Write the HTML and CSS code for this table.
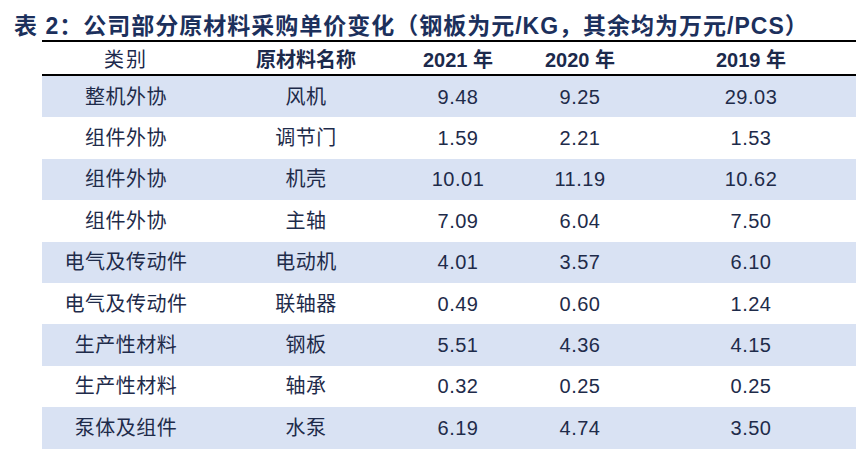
FILE: index.html
```html
<!DOCTYPE html>
<html lang="zh-CN">
<head>
<meta charset="utf-8">
<title>表2</title>
<link rel="stylesheet" href="styles.css">
</head>
<body>
<div class="page">
  <h1 class="title">表 2：公司部分原材料采购单价变化（钢板为元/KG，其余均为万元/PCS）</h1>
  <table class="data">
    <colgroup>
      <col class="c1"><col class="c2"><col class="c3"><col class="c4"><col class="c5">
    </colgroup>
    <thead>
      <tr>
        <th class="light">类别</th>
        <th>原材料名称</th>
        <th>2021 年</th>
        <th>2020 年</th>
        <th>2019 年</th>
      </tr>
    </thead>
    <tbody>
      <tr class="shade"><td>整机外协</td><td>风机</td><td>9.48</td><td>9.25</td><td>29.03</td></tr>
      <tr><td>组件外协</td><td>调节门</td><td>1.59</td><td>2.21</td><td>1.53</td></tr>
      <tr class="shade"><td>组件外协</td><td>机壳</td><td>10.01</td><td>11.19</td><td>10.62</td></tr>
      <tr><td>组件外协</td><td>主轴</td><td>7.09</td><td>6.04</td><td>7.50</td></tr>
      <tr class="shade"><td>电气及传动件</td><td>电动机</td><td>4.01</td><td>3.57</td><td>6.10</td></tr>
      <tr><td>电气及传动件</td><td>联轴器</td><td>0.49</td><td>0.60</td><td>1.24</td></tr>
      <tr class="shade"><td>生产性材料</td><td>钢板</td><td>5.51</td><td>4.36</td><td>4.15</td></tr>
      <tr><td>生产性材料</td><td>轴承</td><td>0.32</td><td>0.25</td><td>0.25</td></tr>
      <tr class="shade"><td>泵体及组件</td><td>水泵</td><td>6.19</td><td>4.74</td><td>3.50</td></tr>
    </tbody>
  </table>
</div>
</body>
</html>
```

FILE: styles.css
```css
html, body {
  margin: 0;
  padding: 0;
  background: #ffffff;
}

.page {
  width: 866px;
  height: 451px;
  overflow: hidden;
}

.title {
  margin: 0;
  height: 40px;
  padding-left: 14px;
  box-sizing: border-box;
  padding-top: 10px;
  font-family: "Liberation Sans", "Noto Sans CJK SC", sans-serif;
  font-weight: 700;
  font-size: 23px;
  line-height: 32px;
  letter-spacing: 1px;
  color: #1c305c;
  white-space: nowrap;
}

.data {
  margin-left: 42px;
  width: 814px;
  border-collapse: collapse;
  table-layout: fixed;
  font-family: "Liberation Sans", "Noto Sans CJK SC", sans-serif;
  font-size: 20px;
  color: #1e2b4a;
}

.c1 { width: 168px; }
.c2 { width: 192px; }
.c3 { width: 112px; }
.c4 { width: 132px; }
.c5 { width: 210px; }

.data thead tr {
  border-top: 2px solid #000000;
  border-bottom: 2px solid #000000;
}

.data th {
  height: 34px;
  padding: 4px 0 0 0;
  box-sizing: border-box;
  font-weight: 700;
  text-align: center;
  vertical-align: middle;
  line-height: 24px;
  color: #1c2a4c;
}

.data th.light {
  font-weight: 400;
  letter-spacing: 2px;
}

.data td {
  height: 41.4px;
  padding: 0;
  text-align: center;
  vertical-align: middle;
  line-height: 24px;
  letter-spacing: 0.5px;
}

.data tr.shade td {
  background: #d9e2f3;
}
```
